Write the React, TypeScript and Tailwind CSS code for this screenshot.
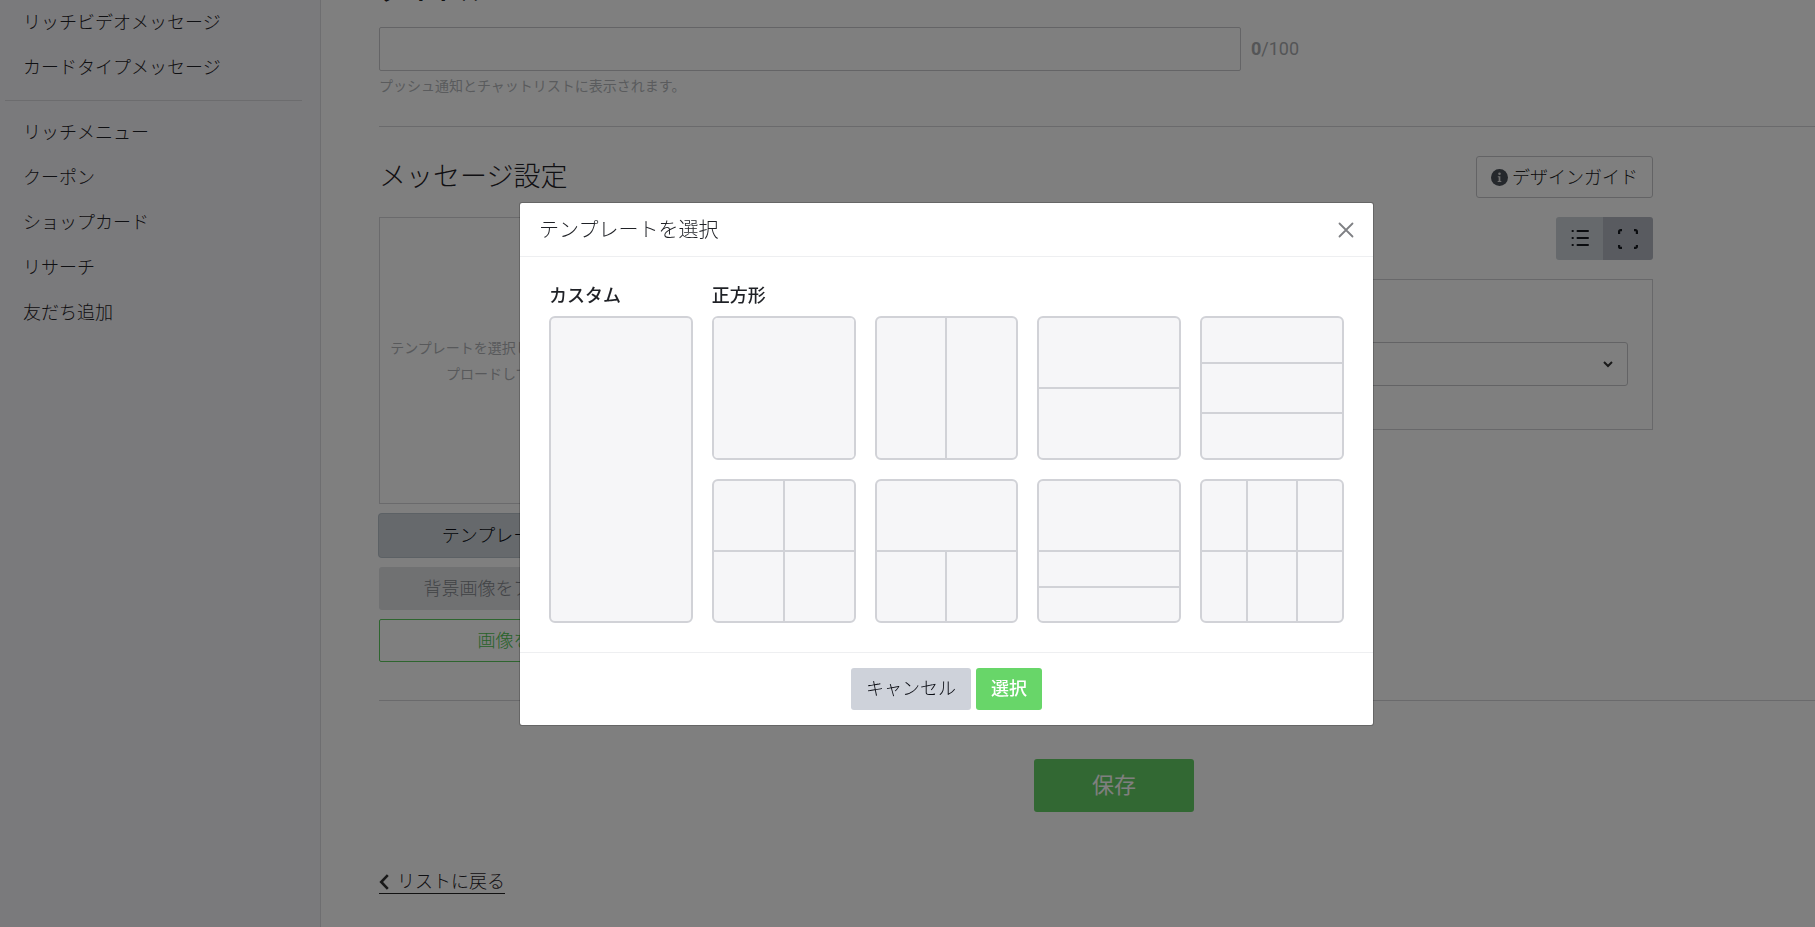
import React from "react";

const primaryLinks = ["リッチビデオメッセージ", "カードタイプメッセージ"];
const secondaryLinks = ["リッチメニュー", "クーポン", "ショップカード", "リサーチ", "友だち追加"];

type Template = { name: string; grid: string; cells: string[] };

const squareTemplates: Template[] = [
  { name: "1分割", grid: "", cells: [""] },
  { name: "左右2分割", grid: "grid-cols-2", cells: ["", ""] },
  { name: "上下2分割", grid: "grid-rows-2", cells: ["", ""] },
  { name: "上下3分割", grid: "grid-rows-[44fr_47fr_44fr]", cells: ["", "", ""] },
  { name: "4分割", grid: "grid-cols-2 grid-rows-2", cells: ["", "", "", ""] },
  { name: "上1下2分割", grid: "grid-cols-2 grid-rows-2", cells: ["col-span-2", "", ""] },
  { name: "上1下2段分割", grid: "grid-rows-[69fr_34fr_33fr]", cells: ["", "", ""] },
  { name: "6分割", grid: "grid-cols-[44fr_47fr_44fr] grid-rows-2", cells: ["", "", "", "", "", ""] },
];

function NavItem({ label }: { label: string }) {
  return (
    <li>
      <a href="#" className="flex h-[45px] items-center px-[23px] text-[18px]">
        {label}
      </a>
    </li>
  );
}

function Sidebar() {
  return (
    <nav className="w-[321px] shrink-0 border-r border-[#dcdde0] bg-[#f5f5f8]">
      <ul>
        {primaryLinks.map((label) => (
          <NavItem key={label} label={label} />
        ))}
      </ul>
      <hr className="mt-[10px] mr-[18px] mb-[9px] ml-[5px] border-[#d8d9dc]" />
      <ul>
        {secondaryLinks.map((label) => (
          <NavItem key={label} label={label} />
        ))}
      </ul>
    </nav>
  );
}

function InfoIcon() {
  return (
    <svg viewBox="0 0 16 16" className="size-[17px]" aria-hidden="true">
      <circle cx="8" cy="8" r="8" fill="#4b5058" />
      <circle cx="8" cy="4.4" r="1.2" fill="#ddd" />
      <path d="M6.4 6.8h2.4v4.4h.9v1H6.3v-1h.9V7.800h-.8z" fill="#ddd" />
    </svg>
  );
}

function ListIcon() {
  return (
    <svg viewBox="0 0 18 18" className="size-[18px]" fill="none" stroke="#15181f" strokeWidth="2" strokeLinecap="round" aria-hidden="true">
      <path d="M6.500 1H17M6.500 8H17M6.500 15H17" />
      <path d="M1.500 1h.4M1.500 8h.4M1.500 15h.4" />
    </svg>
  );
}

function ExpandIcon() {
  return (
    <svg viewBox="0 0 20 20" className="size-5" fill="none" stroke="#15181f" strokeWidth="2.200" aria-hidden="true">
      <path d="M1.100 4V1.600a1.500 1.500 0 0 1 1.500-1.500H4M16 .1h1.400a1.500 1.500 0 0 1 1.500 1.500V4M18.900 15v1.400a1.500 1.500 0 0 1-1.500 1.500H16M4 17.900H2.600a1.500 1.500 0 0 1-1.500-1.500V15" transform="translate(0 1)" />
    </svg>
  );
}

function Content() {
  return (
    <main className="min-w-0 flex-1 bg-white pr-[44px] pb-8 pl-[58px]">
      <label htmlFor="title" className="-mt-[27px] mb-[18px] block text-[27px] leading-9 font-medium text-[#222]">
        タイトル
      </label>
      <div className="flex items-center gap-[10px]">
        <input id="title" type="text" className="h-11 w-[862px] rounded-[2px] border border-[#c8c9cc] bg-white px-3" />
        <span className="text-[18px] leading-6 font-normal text-[#a9abae]">
          <b>0</b>/100
        </span>
      </div>
      <p className="mt-[5px] text-[14px] leading-5 font-normal text-[#b4b7bb]">プッシュ通知とチャットリストに表示されます。</p>
      <hr className="-mr-[44px] mt-[30px] border-[#d4d5d8]" />

      <div className="max-w-[1274px]">
        <div className="mt-[29px] flex h-[42px] items-center justify-between">
          <h2 className="text-[27px] leading-9">メッセージ設定</h2>
          <a href="#" className="flex h-[42px] items-center gap-1 rounded-[3px] border border-[#c6c7ca] px-[14px] text-[18px] text-[#222]">
            <InfoIcon />
            デザインガイド
          </a>
        </div>

        <div className="mt-[19px] flex gap-6">
          <div className="flex w-[287px] flex-col">
            <div className="flex aspect-square items-center justify-center border border-[#d4d5d8] px-1 text-center text-[14px] leading-[26px] font-normal text-[#b0b3b7]">
              テンプレートを選択して、背景画像をアッ
              <br />
              プロードしてください。
            </div>
            <button type="button" className="mt-[10px] h-[43px] rounded-[3px] bg-[#ccd3d8] text-[18px] text-[#0b0d14] ring-1 ring-[#b9c2cb]">
              テンプレートを選択
            </button>
            <button type="button" disabled className="mt-[10px] h-[43px] rounded-[3px] bg-[#e0e2e5] text-[18px] text-[#83868c]">
              背景画像をアップロード
            </button>
            <button type="button" className="mt-[9px] h-[43px] rounded-[2px] border border-[#5ccb5f] text-[18px] text-[#4fc552]">
              画像を作成
            </button>
          </div>

          <div className="flex-1">
            <div className="flex justify-end">
              <button type="button" aria-label="リスト表示" className="flex h-[43px] w-[47px] items-center justify-center rounded-l-[3px] bg-[#ccd3d8]">
                <ListIcon />
              </button>
              <button type="button" aria-label="全体表示" className="flex h-[43px] w-[50px] items-center justify-center rounded-r-[3px] bg-[#b2b6c0]">
                <ExpandIcon />
              </button>
            </div>
            <div className="mt-[19px] border border-[#d0d1d4] px-6 pt-[62px] pb-[43px]">
              <div className="relative">
                <select aria-label="アクション" className="block h-11 w-full appearance-none rounded-[3px] border border-[#c6c7ca] bg-white px-3" />
                <svg viewBox="0 0 10 8" className="pointer-events-none absolute top-[18px] right-[15px] h-2 w-[10px]" fill="none" stroke="#333" strokeWidth="2" aria-hidden="true">
                  <path d="M1 2l4 4 4-4" />
                </svg>
              </div>
            </div>
          </div>
        </div>
      </div>

      <hr className="-mr-[44px] mt-[38px] border-[#d4d5d8]" />
      <div className="mt-[58px] flex justify-center">
        <button type="button" className="h-[53px] w-[160px] rounded-[3px] bg-[#65d166] text-[22px] font-normal text-white">
          保存
        </button>
      </div>
      <a href="#" className="mt-[58px] inline-flex h-6 items-center gap-2 border-b border-[#222] text-[18px] leading-6">
        <svg viewBox="0 0 10 16" className="h-4 w-[10px]" fill="none" stroke="#333" strokeWidth="2.600" aria-hidden="true">
          <path d="M8.800 1.200L2.200 8l6.600 6.800" />
        </svg>
        リストに戻る
      </a>
    </main>
  );
}

function TemplateOption({ template }: { template: Template }) {
  return (
    <button
      type="button"
      aria-label={template.name}
      className={`grid aspect-square w-full gap-[2px] overflow-hidden rounded-[6px] border-2 border-[#d1d2d7] bg-[#d1d2d7] ${template.grid}`}
    >
      {template.cells.map((span, i) => (
        <span key={i} className={`size-full bg-[#f6f6f8] ${span}`} />
      ))}
    </button>
  );
}

function TemplateDialog() {
  return (
    <div
      role="dialog"
      aria-modal="true"
      aria-labelledby="dialog-title"
      className="w-full max-w-[855px] rounded-[3px] border border-black/20 bg-white bg-clip-padding"
    >
      <header className="flex h-[54px] items-center justify-between border-b border-[#eeeff1] pr-[19px] pl-[19px]">
        <h2 id="dialog-title" className="text-[20px]">
          テンプレートを選択
        </h2>
        <button type="button" aria-label="閉じる">
          <svg viewBox="0 0 16 16" className="size-4" fill="none" stroke="#7f8084" strokeWidth="1.800" strokeLinecap="round" aria-hidden="true">
            <path d="M1.500 1.500l13 13M14.500 1.500l-13 13" />
          </svg>
        </button>
      </header>

      <div className="grid grid-cols-5 gap-x-[19px] px-[29px] pt-6 pb-[29px]">
        <section className="flex flex-col">
          <h3 className="mb-[5px] text-[18px] leading-[30px] font-medium">カスタム</h3>
          <button type="button" aria-label="カスタム" className="w-full flex-1 rounded-[6px] border-2 border-[#d1d2d7] bg-[#f6f6f8]" />
        </section>
        <section className="col-span-4">
          <h3 className="mb-[5px] text-[18px] leading-[30px] font-medium">正方形</h3>
          <div className="grid grid-cols-4 gap-[19px]">
            {squareTemplates.map((template) => (
              <TemplateOption key={template.name} template={template} />
            ))}
          </div>
        </section>
      </div>

      <footer className="flex justify-center gap-[5px] border-t border-[#eeeff1] py-[15px]">
        <button type="button" className="h-[42px] rounded-[3px] bg-[#ced2da] px-[15px] text-[18px] text-[#0b0d14]">
          キャンセル
        </button>
        <button type="button" className="h-[42px] rounded-[3px] bg-[#68d669] px-[15px] text-[18px] font-medium text-white">
          選択
        </button>
      </footer>
    </div>
  );
}

export default function App() {
  return (
    <div className="min-h-screen overflow-hidden font-['Roboto','Noto_Sans_CJK_JP',sans-serif] font-light text-[#1f2126]">
      <div className="flex min-h-screen w-[calc(100%+78px)]">
        <Sidebar />
        <Content />
      </div>
      <div className="fixed inset-y-0 left-0 flex w-[calc(100%+78px)] items-center justify-center bg-black/50 pt-px">
        <TemplateDialog />
      </div>
    </div>
  );
}
